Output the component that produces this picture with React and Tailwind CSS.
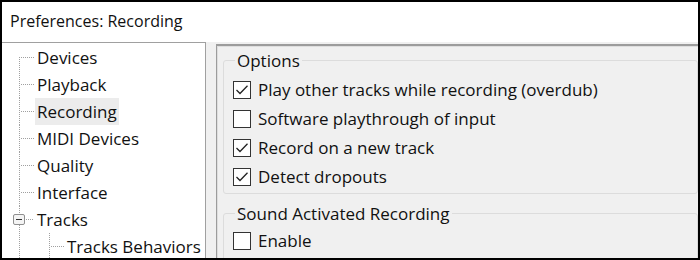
import React from "react";

const treeItems = [
  { label: "Devices", kind: "first" },
  { label: "Playback", kind: "mid" },
  { label: "Recording", kind: "mid", selected: true },
  { label: "MIDI Devices", kind: "mid" },
  { label: "Quality", kind: "mid" },
  { label: "Interface", kind: "mid" },
  { label: "Tracks", kind: "parent" },
  { label: "Tracks Behaviors", kind: "child" },
];

const dot = { stroke: "#a0a0a0", strokeWidth: 1, strokeDasharray: "1 1", shapeRendering: "crispEdges" };

const Connector = ({ kind }) => {
  if (kind === "child") {
    return (
      <svg width="63" height="27" className="shrink-0">
        <line x1="17.5" y1="0" x2="17.5" y2="27" {...dot} />
        <line x1="47.5" y1="0" x2="47.5" y2="27" {...dot} />
        <line x1="49" y1="13.5" x2="62" y2="13.5" {...dot} />
      </svg>
    );
  }
  if (kind === "parent") {
    return (
      <svg width="33" height="27" className="shrink-0">
        <line x1="17.5" y1="0" x2="17.5" y2="8" {...dot} />
        <line x1="17.5" y1="19" x2="17.5" y2="27" {...dot} />
        <rect x="11.5" y="8.5" width="11" height="10" rx="1.5" fill="#f4f4f4" stroke="#8f8f8f" />
        <line x1="14" y1="13.5" x2="20" y2="13.5" stroke="#333" strokeWidth="1" shapeRendering="crispEdges" />
        <line x1="24" y1="13.5" x2="32" y2="13.5" {...dot} />
      </svg>
    );
  }
  return (
    <svg width="33" height="27" className="shrink-0">
      <line x1="17.5" y1={kind === "first" ? 13 : 0} x2="17.5" y2="27" {...dot} />
      <line x1="19" y1="13.5" x2="32" y2="13.5" {...dot} />
    </svg>
  );
};

const Check = ({ checked, label }) => (
  <div className="flex items-center h-[29px]">
    <div className="w-[18px] h-[18px] border border-[#333] bg-white shrink-0 flex items-center justify-center">
      {checked && (
        <svg width="16" height="16" viewBox="0 0 16 16">
          <polyline points="2.5,8 6,11.5 13.5,3.8" fill="none" stroke="#222" strokeWidth="1.3" />
        </svg>
      )}
    </div>
    <span className="ml-[7px] whitespace-nowrap">{label}</span>
  </div>
);

const GroupBox = ({ title, className, children }) => (
  <div className={`relative border border-[#dcdcdc] rounded-[3px] pl-[9px] ${className}`}>
    <span className="absolute left-[11px] -top-[12px] px-[2px] bg-[#f0f0f0] leading-[23px] whitespace-nowrap">
      {title}
    </span>
    {children}
  </div>
);

export default function App() {
  return (
    <div
      className="w-[700px] h-[260px] border-2 border-black bg-[#f0f0f0] overflow-hidden flex flex-col text-[17px] font-medium text-[#111]"
      style={{ fontFamily: '"Open Sans", "Noto Sans", sans-serif' }}
    >
      {/* Title bar */}
      <div className="h-[40px] bg-white flex items-center pl-[8px] pb-[3px] text-[16px] font-normal shrink-0">
        Preferences: Recording
      </div>

      <div className="flex flex-1 min-h-0">
        {/* Tree */}
        <div className="w-[204px] bg-white border-t border-r border-[#a0a0a0] pt-[1px] shrink-0 overflow-hidden">
          {treeItems.map((item) => (
            <div key={item.label} className="flex items-center h-[27px]">
              <Connector kind={item.kind} />
              <span
                className={`px-[2px] h-[27px] flex items-center whitespace-nowrap ${
                  item.selected ? "bg-[#ececec]" : ""
                }`}
              >
                {item.label}
              </span>
            </div>
          ))}
        </div>

        {/* Settings panel */}
        <div className="flex-1 ml-[10px] mt-[2px] border-t-2 border-l border-[#9c9c9c]">
          <div className="h-full border-t border-l border-[#dedede] pl-[5px] pt-[13px]">
            <GroupBox title="Options" className="pt-[14px] pb-[2px]">
              <Check checked label="Play other tracks while recording (overdub)" />
              <Check label="Software playthrough of input" />
              <Check checked label="Record on a new track" />
              <Check checked label="Detect dropouts" />
            </GroupBox>
            <GroupBox title="Sound Activated Recording" className="mt-[19px] pt-[12px] pb-[10px]">
              <Check label="Enable" />
            </GroupBox>
          </div>
        </div>
      </div>
    </div>
  );
}
